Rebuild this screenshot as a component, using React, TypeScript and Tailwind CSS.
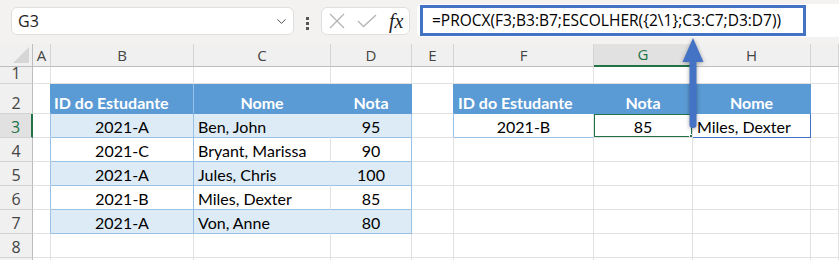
import { ChevronDown } from 'lucide-react';

const gridCell = 'border-r border-b border-r-[#e1e1e1] border-b-[#e1e1e1] bg-white';
const edgeA = 'border-r border-b border-r-[#9bc2e6] border-b-[#e1e1e1] bg-white';
const headBlue = 'border-r border-b border-r-[#5b9bd5] border-b-[#5b9bd5] bg-[#5b9bd5] text-white font-bold';

function Cell({ cls, children }: { cls: string; children?: React.ReactNode }) {
  return (
    <div className={'flex items-end overflow-hidden whitespace-nowrap leading-[20px] text-[16px] text-black ' + cls}>
      {children}
    </div>
  );
}

function ColHead({ label, active }: { label: string; active?: boolean }) {
  if (active) {
    return (
      <div className="flex items-center justify-center border-r border-b-2 border-r-[#d4d4d4] border-b-[#217346] bg-[#e1e1e1] font-['Open_Sans',sans-serif] text-[15px] text-[#217346]">
        {label}
      </div>
    );
  }
  return (
    <div className="flex items-center justify-center border-r border-b border-r-[#d4d4d4] border-b-[#bdbdbd] bg-[#f0f0f0] font-['Open_Sans',sans-serif] text-[15px] text-[#444]">
      {label}
    </div>
  );
}

function RowHead({ n, active }: { n?: number; active?: boolean }) {
  if (active) {
    return (
      <div className="flex items-end justify-center border-r-2 border-b border-r-[#217346] border-b-[#d4d4d4] bg-[#e1e1e1] font-['Open_Sans',sans-serif] text-[16px] leading-[20px] text-[#217346]">
        {n}
      </div>
    );
  }
  return (
    <div className="flex items-end justify-center border-r border-b border-r-[#bdbdbd] border-b-[#d4d4d4] bg-[#f0f0f0] font-['Open_Sans',sans-serif] text-[16px] leading-[20px] text-[#444]">
      {n}
    </div>
  );
}

const students = [
  { id: '2021-A', name: 'Ben, John', grade: '95' },
  { id: '2021-C', name: 'Bryant, Marissa', grade: '90' },
  { id: '2021-A', name: 'Jules, Chris', grade: '100' },
  { id: '2021-B', name: 'Miles, Dexter', grade: '85' },
  { id: '2021-A', name: 'Von, Anne', grade: '80' },
];

function Toolbar() {
  return (
    <div className="flex h-[44px] items-start bg-[#f3f2f1] font-['Open_Sans',sans-serif]">
      <div className="mt-[7px] ml-[11px] flex h-[28px] w-[283px] items-center justify-between rounded-[6px] border border-[#e1dfdd] bg-white pr-[4px] pl-[6px]">
        <span className="text-[16px] text-[#222]">G3</span>
        <ChevronDown size={15} strokeWidth={1.5} className="text-[#444]" />
      </div>
      <div className="mt-[17px] ml-[12px] flex flex-col gap-[2px]">
        <span className="block h-[3px] w-[3px] bg-[#555]" />
        <span className="block h-[3px] w-[3px] bg-[#555]" />
        <span className="block h-[3px] w-[3px] bg-[#555]" />
      </div>
      <div className="mt-[7px] ml-[12px] flex h-[28px] w-[89px] items-center rounded-[6px] border border-[#e1dfdd] bg-white pl-[7px]">
        <svg width="16" height="16" viewBox="0 0 16 16" fill="none" stroke="#b4b4b4" strokeWidth={1.3}>
          <path d="M1 1l14 14M15 1L1 15" />
        </svg>
        <svg className="ml-[12px]" width="20" height="14" viewBox="0 0 20 14" fill="none" stroke="#b4b4b4" strokeWidth={1.3}>
          <path d="M1 7l5.5 5.5L19 1" />
        </svg>
        <span className="ml-[12px] font-['Liberation_Serif',serif] text-[20px] leading-none text-[#222] italic">fx</span>
      </div>
      <div className="mt-[4px] ml-[7px] h-[33px] flex-1 rounded-l-[5px] bg-white">
        <div className="mt-[1px] ml-[3px] flex h-[31px] w-[386px] items-center border-[3px] border-[#4472c4] pl-[9px] text-[15.5px] text-black">
          =PROCX(F3;B3:B7;ESCOLHER({'{'}2\1{'}'};C3:C7;D3:D7))
        </div>
      </div>
    </div>
  );
}

export default function App() {
  return (
    <div className="relative h-[260px] w-[839px] overflow-hidden bg-white font-['Lato',sans-serif]">
      <Toolbar />
      <div className="grid grid-cols-[33px_18px_143px_137px_81px_42px_140px_99px_118px_1fr] grid-rows-[23px_17px_30px_24px_24px_24px_24px_24px_24px_24px]">
        {/* column headers */}
        <div className="relative border-r border-b border-r-[#bdbdbd] border-b-[#bdbdbd] bg-[#f0f0f0]">
          <svg className="absolute right-[3px] bottom-[3px]" width="16" height="16" viewBox="0 0 16 16">
            <path d="M16 0V16H0Z" fill="#d6d6d6" />
          </svg>
        </div>
        <ColHead label="A" />
        <ColHead label="B" />
        <ColHead label="C" />
        <ColHead label="D" />
        <ColHead label="E" />
        <ColHead label="F" />
        <ColHead label="G" active />
        <ColHead label="H" />
        <ColHead label="" />

        {/* row 1 */}
        <RowHead n={1} />
        <Cell cls={gridCell} />
        <Cell cls={gridCell} />
        <Cell cls={gridCell} />
        <Cell cls={gridCell} />
        <Cell cls={gridCell} />
        <Cell cls={gridCell} />
        <Cell cls={gridCell} />
        <Cell cls={gridCell} />
        <Cell cls={gridCell} />

        {/* row 2: headers */}
        <RowHead n={2} />
        <Cell cls="border-r border-b border-r-[#5b9bd5] border-b-[#e1e1e1] bg-white" />
        <Cell cls="border-r border-b border-r-[#9bc2e6] border-b-[#5b9bd5] bg-[#5b9bd5] pl-[3px] font-bold text-white">
          ID do Estudante
        </Cell>
        <Cell cls={headBlue + ' justify-center'}>Nome</Cell>
        <Cell cls={headBlue + ' justify-center'}>Nota</Cell>
        <Cell cls="border-r border-b border-r-[#5b9bd5] border-b-[#e1e1e1] bg-white" />
        <Cell cls={headBlue + ' pl-[4px]'}>ID do Estudante</Cell>
        <Cell cls={headBlue + ' justify-center'}>Nota</Cell>
        <Cell cls={headBlue + ' justify-center'}>Nome</Cell>
        <Cell cls={gridCell} />

        {students.map((s, i) => {
          const row = i + 3;
          const banded = i % 2 === 0;
          return [
            <RowHead key={'h' + row} n={row} active={row === 3} />,
            <Cell key={'a' + row} cls={edgeA} />,
            <Cell
              key={'b' + row}
              cls={
                banded
                  ? 'justify-center border-r border-b border-r-[#9bc2e6] border-b-[#9bc2e6] bg-[#ddebf7]'
                  : 'justify-center border-r border-b border-r-[#9bc2e6] border-b-[#9bc2e6] bg-white'
              }
            >
              {s.id}
            </Cell>,
            <Cell
              key={'c' + row}
              cls={
                banded
                  ? 'border-r border-b border-r-[#ddebf7] border-b-[#9bc2e6] bg-[#ddebf7] pl-[4px]'
                  : 'border-r border-b border-r-[#e1e1e1] border-b-[#9bc2e6] bg-white pl-[4px]'
              }
            >
              {s.name}
            </Cell>,
            <Cell
              key={'d' + row}
              cls={
                banded
                  ? 'justify-center border-r border-b border-r-[#9bc2e6] border-b-[#9bc2e6] bg-[#ddebf7]'
                  : 'justify-center border-r border-b border-r-[#9bc2e6] border-b-[#9bc2e6] bg-white'
              }
            >
              {s.grade}
            </Cell>,
            ...(row === 3
              ? [
                  <Cell key="e3" cls="border-r border-b border-r-[#9bc2e6] border-b-[#e1e1e1] bg-white" />,
                  <Cell key="f3" cls="justify-center border-r border-b border-r-[#e1e1e1] border-b-[#9bc2e6] bg-white">
                    2021-B
                  </Cell>,
                  <Cell key="g3" cls="relative justify-center border-r border-b border-r-[#e1e1e1] border-b-[#e1e1e1] bg-white">
                    85
                    <div className="absolute -top-px -right-px -bottom-px -left-px border-2 border-[#217346]" />
                    <div className="absolute -right-[4px] -bottom-[4px] h-[7px] w-[7px] border border-white bg-[#217346]" />
                  </Cell>,
                  <Cell key="h3" cls="border-r border-b border-r-[#4472c4] border-b-[#4472c4] bg-white pl-[4px]">
                    Miles, Dexter
                  </Cell>,
                  <Cell key="i3" cls={gridCell} />,
                ]
              : [
                  <Cell key={'e' + row} cls={gridCell} />,
                  <Cell key={'f' + row} cls={gridCell} />,
                  <Cell key={'g' + row} cls={gridCell} />,
                  <Cell key={'h' + row} cls={gridCell} />,
                  <Cell key={'i' + row} cls={gridCell} />,
                ]),
          ];
        })}

        {[8, 9].map((row) => [
          <RowHead key={'h' + row} n={row === 8 ? 8 : undefined} />,
          ...['a', 'b', 'c', 'd', 'e', 'f', 'g', 'h', 'i'].map((c) => <Cell key={c + row} cls={gridCell} />),
        ])}
      </div>

      {/* annotation arrow */}
      <svg
        className="absolute top-[36px] left-[680px] drop-shadow-[0_1px_2px_rgba(0,0,0,0.35)]"
        width="26"
        height="96"
        viewBox="0 0 26 96"
      >
        <path d="M13 2L23.5 26H16.5V89Q16.5 92 13 92Q9.5 92 9.5 89V26H2.5Z" fill="#4472c4" />
      </svg>
    </div>
  );
}
